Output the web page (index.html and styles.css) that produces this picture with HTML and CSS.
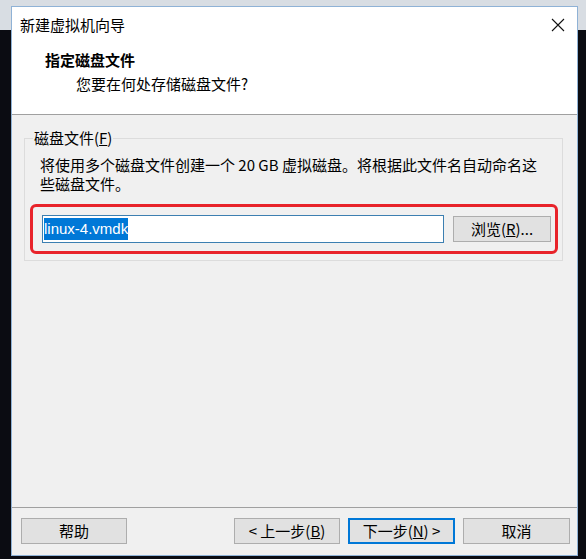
FILE: index.html
```html
<!DOCTYPE html>
<html lang="zh-CN">
<head>
  <meta charset="UTF-8">
  <title>新建虚拟机向导</title>
  <link rel="stylesheet" href="styles.css">
</head>
<body>
  <div class="wizard">
    <div class="titlebar">
      <span class="title">新建虚拟机向导</span>
      <svg class="close" width="14" height="14" viewBox="0 0 14 14">
        <path d="M1 1 L13 13 M13 1 L1 13" stroke="#111" stroke-width="1.1" fill="none"/>
      </svg>
    </div>

    <div class="header">
      <div class="header-title">指定磁盘文件</div>
      <div class="header-sub">您要在何处存储磁盘文件?</div>
    </div>

    <div class="content">
      <fieldset class="group">
        <legend>磁盘文件(<u>F</u>)</legend>
        <p class="desc">将使用多个磁盘文件创建一个 20 GB 虚拟磁盘。将根据此文件名自动命名这些磁盘文件。</p>
        <div class="file-row">
          <div class="file-input"><span class="selected">linux-4.vmdk</span></div>
          <button class="btn browse">浏览(<u>R</u>)...</button>
        </div>
      </fieldset>
    </div>

    <div class="footer">
      <button class="btn">帮助</button>
      <div class="nav">
        <button class="btn">&lt; 上一步(<u>B</u>)</button>
        <button class="btn primary">下一步(<u>N</u>) &gt;</button>
        <button class="btn">取消</button>
      </div>
    </div>
  </div>
</body>
</html>
```

FILE: styles.css
```css
/* wizard dialog */
body {
  margin: 0;
  width: 586px;
  height: 559px;
  overflow: hidden;
  background: linear-gradient(#d8dde3 0, #d8dde3 30px, #0b0c12 30px);
  font-family: "Noto Sans CJK SC", "Liberation Sans", sans-serif;
  font-size: 15px;
  color: #000;
}

.wizard {
  margin: 6px 0 0 11px;
  width: 567px;
  height: 550px;
  box-sizing: border-box;
  border: 1px solid #8fb2d6;
  background: #fff;
  display: flex;
  flex-direction: column;
}

.titlebar {
  height: 35px;
  display: flex;
  align-items: center;
  justify-content: space-between;
  padding: 0 12px 0 8px;
}

.title {
  line-height: 20px;
}

.header {
  height: 73px;
  box-sizing: border-box;
  padding-top: 7px;
  border-bottom: 1px solid #a0a0a0;
}

.header-title {
  font-weight: bold;
  padding-left: 33px;
  line-height: 22px;
}

.header-sub {
  padding-left: 64px;
  line-height: 22px;
  margin-top: 2px;
}

.content {
  flex: 1;
  background: #f0f0f0;
  padding: 13px 14px 0 12px;
  border-bottom: 1px solid #a0a0a0;
}

.group {
  margin: 0;
  padding: 7px 4px 6px 15px;
  border: 1px solid #dcdcdc;
}

.group legend {
  padding: 0 1px;
  margin-left: -7px;
  line-height: 20px;
}

.desc {
  margin: 0 10px 0 0;
  line-height: 19px;
}

.file-row {
  margin: 11px 0 0 -10px;
  width: 528px;
  box-sizing: border-box;
  border: 3px solid #e8232a;
  border-radius: 6px;
  padding: 8px 4px 8px 9px;
  display: flex;
  align-items: center;
  justify-content: space-between;
}

.file-input {
  width: 402px;
  height: 28px;
  box-sizing: border-box;
  border: 1px solid #3c7fb1;
  background: #fff;
  padding: 2px 1px;
  display: flex;
  align-items: center;
}

.selected {
  background: #0078d7;
  color: #fff;
  font-family: "Liberation Sans", sans-serif;
  font-size: 15px;
  line-height: 22px;
}

.btn {
  width: 107px;
  height: 26px;
  box-sizing: border-box;
  background: #e1e1e1;
  border: 1px solid #adadad;
  font-family: "Noto Sans CJK SC", "Liberation Sans", sans-serif;
  font-size: 15px;
  color: #000;
  padding: 0;
  line-height: 22px;
}

.browse {
  width: 98px;
}

.footer {
  height: 47px;
  background: #f0f0f0;
  display: flex;
  align-items: flex-start;
  justify-content: space-between;
  padding: 10px 7px 0 9px;
  box-sizing: border-box;
}

.footer .btn:first-child {
  width: 106px;
}

.nav {
  display: flex;
  gap: 8px;
}

.primary {
  border: 2px solid #0078d7;
}
```
